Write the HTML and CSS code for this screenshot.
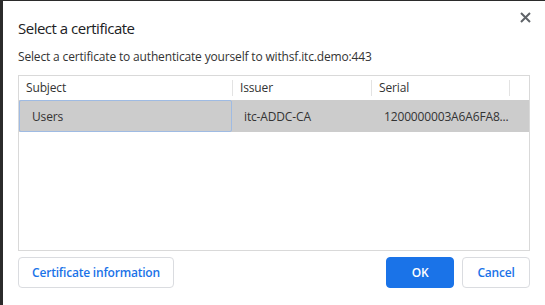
FILE: index.html
```html
<!DOCTYPE html>
<html lang="en">
<head>
  <meta charset="UTF-8" />
  <title>Select a certificate</title>
  <link rel="stylesheet" href="styles.css">
</head>
<body>
  <div class="dialog">
    <button class="close-btn" aria-label="Close">
      <svg width="11" height="11" viewBox="0 0 11 11">
        <path d="M1 1L10 10M10 1L1 10" stroke="#5f6368" stroke-width="2" fill="none"/>
      </svg>
    </button>
    <h1 class="title">Select a certificate</h1>
    <p class="subtitle">Select a certificate to authenticate yourself to withsf.itc.demo:443</p>

    <div class="cert-table">
      <div class="head-row">
        <div class="col col-subject">Subject</div>
        <div class="col col-issuer">Issuer</div>
        <div class="col col-serial">Serial</div>
        <div class="col col-rest"></div>
      </div>
      <div class="row selected">
        <div class="cell cell-subject">Users</div>
        <div class="cell cell-issuer">itc-ADDC-CA</div>
        <div class="cell cell-serial">1200000003A6A6FA8...</div>
      </div>
    </div>

    <div class="footer">
      <button class="btn btn-info">Certificate information</button>
      <div class="spacer"></div>
      <button class="btn btn-primary">OK</button>
      <button class="btn">Cancel</button>
    </div>
  </div>
</body>
</html>
```

FILE: styles.css
```css
body {
  margin: 0;
  background-color: #2b2b2b;
  font-family: "Open Sans", "Noto Sans", Arial, sans-serif;
  color: #202124;
}
.dialog {
  position: relative;
  margin: 1px 0 0 3px;
  height: 304px;
  background-color: #fff;
  padding: 17px 15px 0 15px;
  box-sizing: border-box;
}
.close-btn {
  position: absolute;
  top: 8px;
  right: 12px;
  width: 16px;
  height: 16px;
  padding: 0;
  border: none;
  background: none;
  display: flex;
  align-items: center;
  justify-content: center;
}
.title {
  margin: 0;
  font-size: 15px;
  font-weight: normal;
  line-height: 20px;
  letter-spacing: -0.5px;
}
.subtitle {
  margin: 11px 0 0 0;
  font-size: 12px;
  line-height: 16px;
  color: #333;
  letter-spacing: -0.16px;
}
.cert-table {
  margin-top: 10px;
  height: 176px;
  border: 1px solid #d9d9d9;
  box-sizing: border-box;
  font-size: 12px;
  color: #333;
  letter-spacing: -0.15px;
}
.head-row {
  display: flex;
  height: 24px;
  align-items: center;
}
.col {
  height: 16px;
  line-height: 16px;
  padding-left: 7px;
  border-left: 1px solid #e3e3e3;
  box-sizing: border-box;
}
.col-subject {
  width: 213px;
  border-left: none;
}
.col-issuer {
  width: 139px;
}
.col-serial {
  width: 138px;
}
.col-rest {
  flex: 1;
}
.row {
  display: flex;
  height: 32px;
}
.selected {
  background-color: #cccccc;
}
.cell {
  display: flex;
  align-items: center;
  box-sizing: border-box;
  white-space: nowrap;
}
.cell-subject {
  width: 213px;
  padding-left: 12px;
  border: 1px solid #9fbbe3;
  border-radius: 2px;
}
.cell-issuer {
  width: 139px;
  padding-left: 12px;
}
.cell-serial {
  padding-left: 13px;
}
.footer {
  display: flex;
  margin-top: 6px;
  gap: 8px;
}
.spacer {
  flex: 1;
}
.btn {
  width: 68px;
  height: 31px;
  padding: 0;
  border: 1px solid #dadce0;
  border-radius: 4px;
  background-color: #fff;
  color: #1a73e8;
  font-family: inherit;
  font-size: 12px;
  font-weight: 600;
  letter-spacing: -0.2px;
}
.btn-info {
  width: 156px;
}
.btn-primary {
  background-color: #1a73e8;
  border-color: #1a73e8;
  color: #fff;
}
```
